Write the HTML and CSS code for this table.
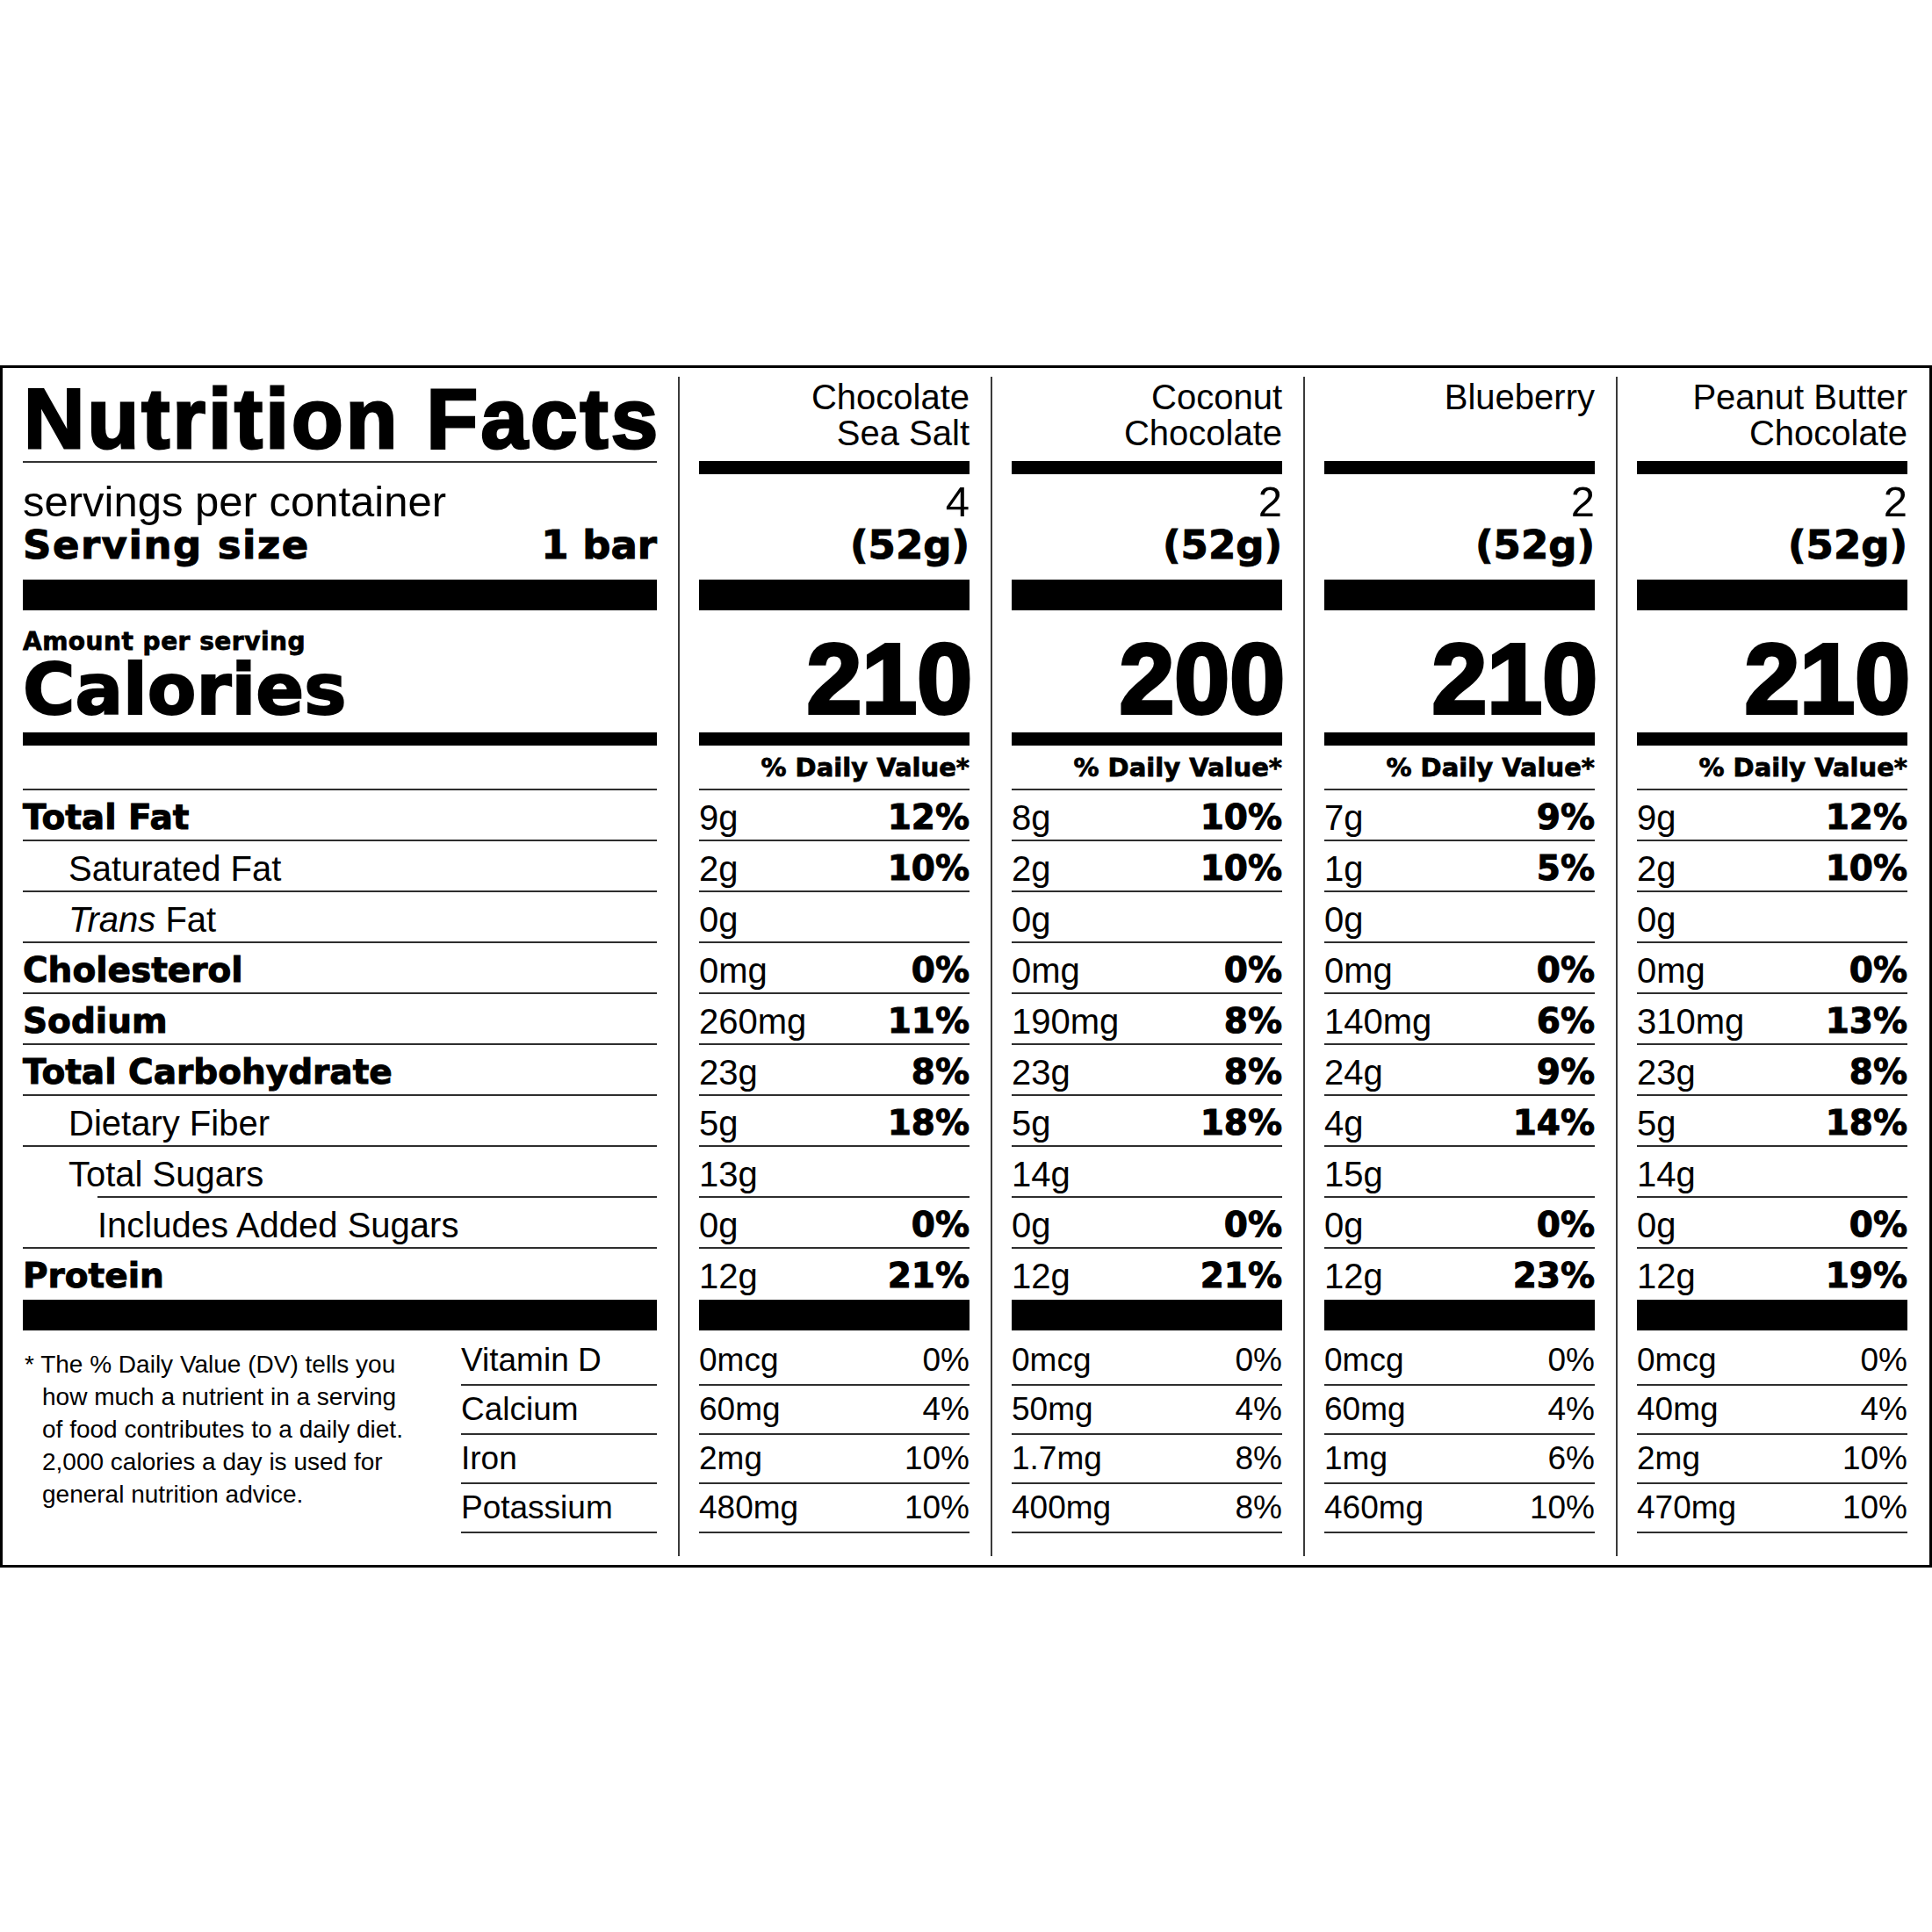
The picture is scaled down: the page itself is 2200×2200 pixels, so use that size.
FILE: index.html
```html
<!DOCTYPE html>
<html lang="en">
<head>
<meta charset="utf-8">
<title>Nutrition Facts</title>
<link rel="stylesheet" href="styles.css">
</head>
<body>
<div class="page">
  <div class="label">
    <!-- Label column -->
    <div class="col col-main">
      <div class="hdr"><div class="title">Nutrition Facts</div></div>
      <div class="sep-thin"></div>
      <div class="serv">
        <div class="serv-l1">servings per container</div>
        <div class="serv-l2"><span class="ss">Serving size</span><span>1 bar</span></div>
      </div>
      <div class="bar35"></div>
      <div class="cal">
        <div class="amt">Amount per serving</div>
        <div class="calories">Calories</div>
      </div>
      <div class="bar15"></div>
      <div class="dv"></div>
      <div class="row"><span class="b">Total Fat</span></div>
      <div class="row"><span class="ind1">Saturated Fat</span></div>
      <div class="row"><span class="ind1"><i>Trans</i> Fat</span></div>
      <div class="row"><span class="b">Cholesterol</span></div>
      <div class="row"><span class="b">Sodium</span></div>
      <div class="row"><span class="b">Total Carbohydrate</span></div>
      <div class="row"><span class="ind1">Dietary Fiber</span></div>
      <div class="row"><span class="ind1">Total Sugars</span></div>
      <div class="row row-added"><span>Includes Added Sugars</span></div>
      <div class="row last"><span class="b">Protein</span></div>
      <div class="bar35"></div>
      <div class="bottom">
        <p class="footnote">* The % Daily Value (DV) tells you<br>how much a nutrient in a serving<br>of food contributes to a daily diet.<br>2,000 calories a day is used for<br>general nutrition advice.</p>
        <div class="vits">
          <div class="vrow"><span>Vitamin D</span></div>
          <div class="vrow"><span>Calcium</span></div>
          <div class="vrow"><span>Iron</span></div>
          <div class="vrow"><span>Potassium</span></div>
        </div>
      </div>
    </div>

    <!-- Chocolate Sea Salt -->
    <div class="col col-prod">
      <div class="hdr"><div class="pname">Chocolate<br>Sea Salt</div></div>
      <div class="bar15"></div>
      <div class="serv">
        <div class="serv-l1 num">4</div>
        <div class="serv-l2 num">(52g)</div>
      </div>
      <div class="bar35"></div>
      <div class="cal"><div class="calnum">210</div></div>
      <div class="bar15"></div>
      <div class="dv">% Daily Value*</div>
      <div class="row"><span>9g</span><span class="b">12%</span></div>
      <div class="row"><span>2g</span><span class="b">10%</span></div>
      <div class="row"><span>0g</span></div>
      <div class="row"><span>0mg</span><span class="b">0%</span></div>
      <div class="row"><span>260mg</span><span class="b">11%</span></div>
      <div class="row"><span>23g</span><span class="b">8%</span></div>
      <div class="row"><span>5g</span><span class="b">18%</span></div>
      <div class="row"><span>13g</span></div>
      <div class="row"><span>0g</span><span class="b">0%</span></div>
      <div class="row last"><span>12g</span><span class="b">21%</span></div>
      <div class="bar35"></div>
      <div class="vits">
        <div class="vrow"><span>0mcg</span><span>0%</span></div>
        <div class="vrow"><span>60mg</span><span>4%</span></div>
        <div class="vrow"><span>2mg</span><span>10%</span></div>
        <div class="vrow"><span>480mg</span><span>10%</span></div>
      </div>
    </div>

    <!-- Coconut Chocolate -->
    <div class="col col-prod">
      <div class="hdr"><div class="pname">Coconut<br>Chocolate</div></div>
      <div class="bar15"></div>
      <div class="serv">
        <div class="serv-l1 num">2</div>
        <div class="serv-l2 num">(52g)</div>
      </div>
      <div class="bar35"></div>
      <div class="cal"><div class="calnum">200</div></div>
      <div class="bar15"></div>
      <div class="dv">% Daily Value*</div>
      <div class="row"><span>8g</span><span class="b">10%</span></div>
      <div class="row"><span>2g</span><span class="b">10%</span></div>
      <div class="row"><span>0g</span></div>
      <div class="row"><span>0mg</span><span class="b">0%</span></div>
      <div class="row"><span>190mg</span><span class="b">8%</span></div>
      <div class="row"><span>23g</span><span class="b">8%</span></div>
      <div class="row"><span>5g</span><span class="b">18%</span></div>
      <div class="row"><span>14g</span></div>
      <div class="row"><span>0g</span><span class="b">0%</span></div>
      <div class="row last"><span>12g</span><span class="b">21%</span></div>
      <div class="bar35"></div>
      <div class="vits">
        <div class="vrow"><span>0mcg</span><span>0%</span></div>
        <div class="vrow"><span>50mg</span><span>4%</span></div>
        <div class="vrow"><span>1.7mg</span><span>8%</span></div>
        <div class="vrow"><span>400mg</span><span>8%</span></div>
      </div>
    </div>

    <!-- Blueberry -->
    <div class="col col-prod">
      <div class="hdr"><div class="pname">Blueberry</div></div>
      <div class="bar15"></div>
      <div class="serv">
        <div class="serv-l1 num">2</div>
        <div class="serv-l2 num">(52g)</div>
      </div>
      <div class="bar35"></div>
      <div class="cal"><div class="calnum">210</div></div>
      <div class="bar15"></div>
      <div class="dv">% Daily Value*</div>
      <div class="row"><span>7g</span><span class="b">9%</span></div>
      <div class="row"><span>1g</span><span class="b">5%</span></div>
      <div class="row"><span>0g</span></div>
      <div class="row"><span>0mg</span><span class="b">0%</span></div>
      <div class="row"><span>140mg</span><span class="b">6%</span></div>
      <div class="row"><span>24g</span><span class="b">9%</span></div>
      <div class="row"><span>4g</span><span class="b">14%</span></div>
      <div class="row"><span>15g</span></div>
      <div class="row"><span>0g</span><span class="b">0%</span></div>
      <div class="row last"><span>12g</span><span class="b">23%</span></div>
      <div class="bar35"></div>
      <div class="vits">
        <div class="vrow"><span>0mcg</span><span>0%</span></div>
        <div class="vrow"><span>60mg</span><span>4%</span></div>
        <div class="vrow"><span>1mg</span><span>6%</span></div>
        <div class="vrow"><span>460mg</span><span>10%</span></div>
      </div>
    </div>

    <!-- Peanut Butter Chocolate -->
    <div class="col col-prod">
      <div class="hdr"><div class="pname">Peanut Butter<br>Chocolate</div></div>
      <div class="bar15"></div>
      <div class="serv">
        <div class="serv-l1 num">2</div>
        <div class="serv-l2 num">(52g)</div>
      </div>
      <div class="bar35"></div>
      <div class="cal"><div class="calnum">210</div></div>
      <div class="bar15"></div>
      <div class="dv">% Daily Value*</div>
      <div class="row"><span>9g</span><span class="b">12%</span></div>
      <div class="row"><span>2g</span><span class="b">10%</span></div>
      <div class="row"><span>0g</span></div>
      <div class="row"><span>0mg</span><span class="b">0%</span></div>
      <div class="row"><span>310mg</span><span class="b">13%</span></div>
      <div class="row"><span>23g</span><span class="b">8%</span></div>
      <div class="row"><span>5g</span><span class="b">18%</span></div>
      <div class="row"><span>14g</span></div>
      <div class="row"><span>0g</span><span class="b">0%</span></div>
      <div class="row last"><span>12g</span><span class="b">19%</span></div>
      <div class="bar35"></div>
      <div class="vits">
        <div class="vrow"><span>0mcg</span><span>0%</span></div>
        <div class="vrow"><span>40mg</span><span>4%</span></div>
        <div class="vrow"><span>2mg</span><span>10%</span></div>
        <div class="vrow"><span>470mg</span><span>10%</span></div>
      </div>
    </div>
  </div>
</div>
</body>
</html>
```

FILE: styles.css
```css
* { box-sizing: border-box; }

html, body {
  margin: 0;
  background: #fff;
}

body {
  font-family: "Liberation Sans", Arial, Helvetica, sans-serif;
  color: #000;
  width: 2200px;
}

.page {
  padding-top: 416px;
}

.label {
  border: 3px solid #000;
  padding: 10px 0;
  display: grid;
  grid-template-columns: 769px repeat(4, 356px);
}

.col {
  display: flex;
  flex-direction: column;
}

.col-main {
  padding: 0 24px 0 23px;
}

.col-prod {
  border-left: 2px solid #3a3a3a;
  padding: 0 24px 0 22px;
}

/* header */
.hdr {
  height: 96px;
}

.title {
  font-family: "Liberation Sans", Arial, sans-serif;
  font-weight: bold;
  font-size: 96px;
  line-height: 96px;
  letter-spacing: 3.2px;
  -webkit-text-stroke: 3px #000;
  padding-left: 1px;
  white-space: nowrap;
}

.pname {
  font-size: 40px;
  line-height: 41px;
  padding-top: 3px;
  text-align: right;
}

.sep-thin {
  height: 15px;
  border-top: 2px solid #333;
}

.bar15 {
  height: 15px;
  background: #000;
}

.bar35 {
  height: 35px;
  background: #000;
}

/* servings */
.serv {
  height: 120px;
  padding-top: 6px;
}

.serv-l1 {
  font-size: 49px;
  line-height: 50px;
  white-space: nowrap;
}

.serv-l2 {
  font-family: "DejaVu Sans", sans-serif;
  font-weight: bold;
  font-size: 45px;
  line-height: 50px;
  display: flex;
  justify-content: space-between;
  white-space: nowrap;
  -webkit-text-stroke: 1px #000;
}

.ss {
  letter-spacing: 1.5px;
}

.num {
  text-align: right;
  display: block;
}

/* calories */
.cal {
  height: 139px;
  padding-top: 22px;
}

.amt {
  font-family: "DejaVu Sans", sans-serif;
  font-weight: bold;
  font-size: 28px;
  line-height: 27px;
  letter-spacing: 0.5px;
  white-space: nowrap;
  -webkit-text-stroke: 0.8px #000;
}

.calories {
  font-family: "DejaVu Sans", sans-serif;
  font-weight: bold;
  font-size: 81px;
  line-height: 83px;
  white-space: nowrap;
  -webkit-text-stroke: 2px #000;
}

.calnum {
  font-family: "Liberation Sans", Arial, sans-serif;
  font-weight: bold;
  font-size: 113px;
  line-height: 113px;
  text-align: right;
  -webkit-text-stroke: 4px #000;
  margin-right: -3px;
}

/* daily value header */
.dv {
  height: 49px;
  padding-top: 2px;
  font-family: "DejaVu Sans", sans-serif;
  font-weight: bold;
  font-size: 29px;
  line-height: 47px;
  text-align: right;
  white-space: nowrap;
  -webkit-text-stroke: 0.8px #000;
}

/* nutrient rows */
.row {
  height: 58px;
  border-top: 2px solid #2e2e2e;
  padding-top: 6px;
  font-size: 40px;
  line-height: 50px;
  display: flex;
  justify-content: space-between;
  white-space: nowrap;
}

.row.last {
  height: 60px;
}

.b {
  font-family: "DejaVu Sans", sans-serif;
  font-weight: bold;
  font-size: 39px;
  -webkit-text-stroke: 1px #000;
}

.ind1 {
  padding-left: 52px;
}

.row-added {
  margin-left: 85px;
}

/* bottom area */
.bottom {
  display: grid;
  grid-template-columns: 1fr 223px;
}

.footnote {
  margin: 0;
  padding-top: 20px;
  padding-left: 22px;
  text-indent: -20px;
  font-size: 28px;
  line-height: 37px;
  white-space: nowrap;
}

.vits {
  padding-top: 7px;
  height: 257px;
}

.vrow {
  height: 56px;
  border-bottom: 2px solid #2e2e2e;
  font-size: 37px;
  line-height: 54px;
  display: flex;
  justify-content: space-between;
  white-space: nowrap;
}
```
